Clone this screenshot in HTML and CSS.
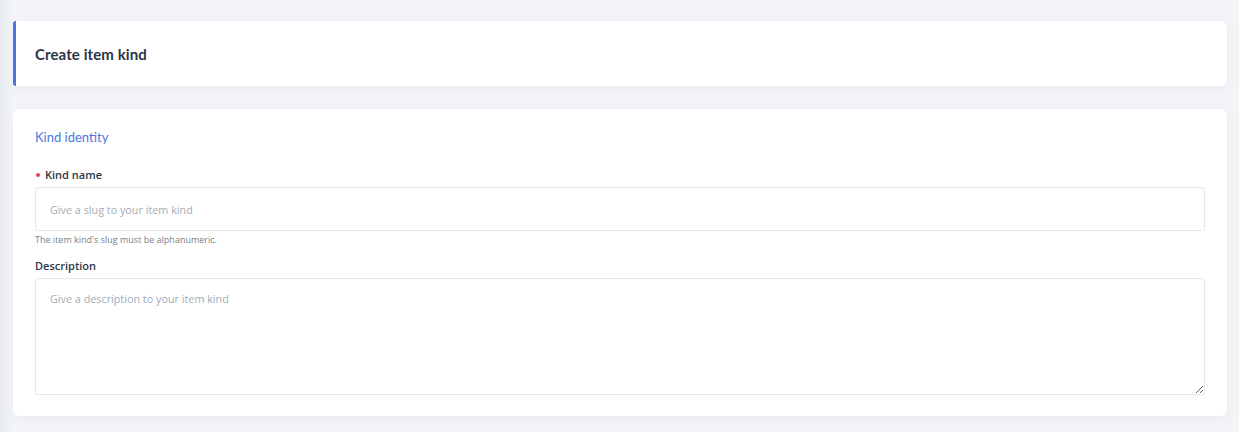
FILE: index.html
```html
<!DOCTYPE html>
<html>
<head>
<meta charset="utf-8">
<link rel="stylesheet" href="styles.css">
</head>
<body>
<main class="page">
  <section class="card header-card">
    <h1 class="title">Create item kind</h1>
  </section>
  <section class="card form-card">
    <h2 class="section-title">Kind identity</h2>
    <div class="field">
      <label class="label required" for="kind-name">Kind name</label>
      <input id="kind-name" class="input" type="text" placeholder="Give a slug to your item kind">
      <div class="help">The item kind's slug must be alphanumeric.</div>
    </div>
    <div class="field field-desc">
      <label class="label" for="kind-desc">Description</label>
      <textarea id="kind-desc" class="textarea" placeholder="Give a description to your item kind"></textarea>
    </div>
  </section>
</main>
</body>
</html>
```

FILE: styles.css
```css
* { box-sizing: border-box; }
html, body { margin: 0; padding: 0; }
body {
  width: 1239px;
  height: 432px;
  overflow: hidden;
  background: #f3f4f8;
  font-family: "Open Sans", "Liberation Sans", sans-serif;
  color: #2d3748;
  position: relative;
}
body::before {
  content: "";
  position: absolute;
  left: 0; top: 0; bottom: 0;
  width: 12px;
  background: linear-gradient(to right, #e6e8f1, rgba(243,244,248,0));
  pointer-events: none;
}
.page {
  padding: 21px 12px 0 13px;
  display: flex;
  flex-direction: column;
  gap: 23px;
}
.card {
  background: #ffffff;
  border-radius: 6px;
  box-shadow: 0 4px 12px rgba(40, 50, 100, 0.04);
}
.header-card {
  height: 65px;
  border-left: 3px solid #4c74e0;
  border-radius: 3px 6px 6px 3px;
  padding-left: 19px;
  display: flex;
  align-items: center;
}
.title {
  margin: 0;
  font-family: "Lato", "Open Sans", sans-serif;
  font-size: 15px;
  font-weight: 700;
  color: #2b3445;
  letter-spacing: 0.1px;
}
.form-card {
  padding: 18px 22px 21px 22px;
}
.section-title {
  margin: 0;
  font-family: "Lato", "Open Sans", sans-serif;
  font-size: 13px;
  font-weight: 400;
  line-height: 20px;
  color: #4a78e0;
}
.field { display: flex; flex-direction: column; }
.field:first-of-type { margin-top: 20px; }
.field-desc { margin-top: 12px; }
.label {
  font-size: 11px;
  font-weight: 600;
  line-height: 16px;
  color: #2d3748;
  margin-bottom: 4px;
  display: flex;
  align-items: center;
}
.required::before {
  content: "";
  width: 4px;
  height: 4px;
  border-radius: 50%;
  background: #ef3f5a;
  margin: 0 5px 0 1px;
}
.input, .textarea {
  width: 100%;
  border: 1px solid #e6e8ec;
  border-radius: 2px;
  background: #fff;
  font-family: "Open Sans", "Liberation Sans", sans-serif;
  font-size: 10.8px;
  color: #2d3748;
  padding: 0 14px;
  outline: none;
}
.input { height: 44px; }
.textarea {
  height: 117px;
  padding-top: 12px;
  resize: vertical;
  display: block;
}
.input::placeholder, .textarea::placeholder { color: #a3acba; }
.help {
  margin-top: 3px;
  font-size: 9px;
  line-height: 12px;
  color: #7a7f87;
}
```
